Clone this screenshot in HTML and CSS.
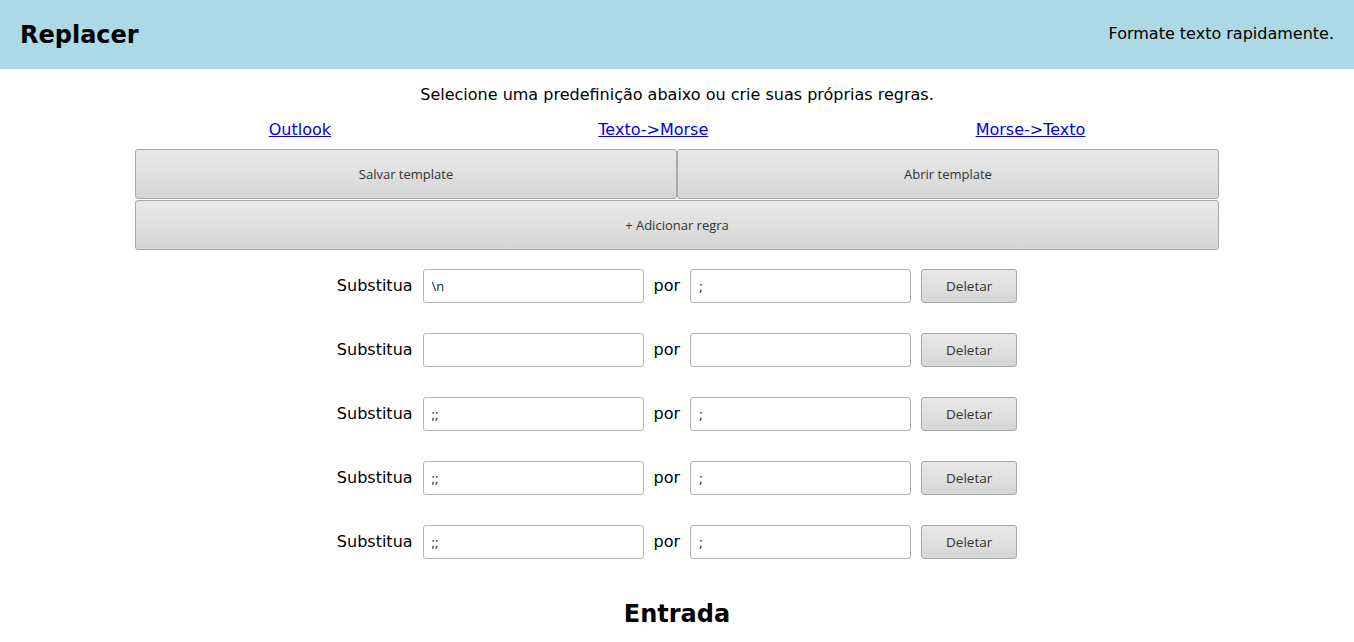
FILE: index.html
```html
<!DOCTYPE html>
<html lang="pt">
<head>
<meta charset="utf-8">
<title>Replacer</title>
<link rel="stylesheet" href="styles.css">
</head>
<body>
<header class="topbar">
  <h1 class="brand">Replacer</h1>
  <span class="tagline">Formate texto rapidamente.</span>
</header>
<main class="main">
  <p class="intro">Selecione uma predefinição abaixo ou crie suas próprias regras.</p>
  <nav class="presets">
    <a href="#">Outlook</a>
    <a href="#">Texto-&gt;Morse</a>
    <a href="#">Morse-&gt;Texto</a>
  </nav>
  <div class="actions">
    <button class="btn">Salvar template</button>
    <button class="btn">Abrir template</button>
    <button class="btn wide">+ Adicionar regra</button>
  </div>
  <div class="rules">
    <div class="rule">
      <span class="lbl">Substitua</span>
      <input class="field" type="text" value="\n">
      <span class="lbl">por</span>
      <input class="field" type="text" value=";">
      <button class="btn del">Deletar</button>
    </div>
    <div class="rule">
      <span class="lbl">Substitua</span>
      <input class="field" type="text" value="">
      <span class="lbl">por</span>
      <input class="field" type="text" value="">
      <button class="btn del">Deletar</button>
    </div>
    <div class="rule">
      <span class="lbl">Substitua</span>
      <input class="field" type="text" value=";;">
      <span class="lbl">por</span>
      <input class="field" type="text" value=";">
      <button class="btn del">Deletar</button>
    </div>
    <div class="rule">
      <span class="lbl">Substitua</span>
      <input class="field" type="text" value=";;">
      <span class="lbl">por</span>
      <input class="field" type="text" value=";">
      <button class="btn del">Deletar</button>
    </div>
    <div class="rule">
      <span class="lbl">Substitua</span>
      <input class="field" type="text" value=";;">
      <span class="lbl">por</span>
      <input class="field" type="text" value=";">
      <button class="btn del">Deletar</button>
    </div>
  </div>
  <h2 class="section">Entrada</h2>
</main>
</body>
</html>
```

FILE: styles.css
```css
html, body {
  margin: 0;
  padding: 0;
}
body {
  font-family: "DejaVu Sans", sans-serif;
  font-size: 16px;
  color: #000;
  background: #fff;
}
.topbar {
  background: #add8e6;
  height: 69px;
  display: flex;
  align-items: center;
  justify-content: space-between;
  padding: 0 20px;
}
.brand {
  margin: 0;
  font-size: 24px;
  font-weight: bold;
}
.tagline {
  font-size: 16px;
  padding-bottom: 2px;
}
.main {
  width: 1084px;
  margin: 0 auto;
}
.intro {
  text-align: center;
  margin: 16px 0 16px;
  line-height: 19px;
}
.presets {
  display: flex;
  justify-content: space-around;
  line-height: 19px;
  margin-bottom: 10px;
}
.presets a {
  color: #0000ee;
  text-decoration: underline;
}
.actions {
  display: grid;
  grid-template-columns: 1fr 1fr;
  gap: 1px 0;
}
.btn {
  font-family: "Open Sans", "DejaVu Sans", sans-serif;
  font-size: 13px;
  color: #333;
  background: linear-gradient(#e9e9e9, #d5d5d5);
  border: 1px solid #a9a9a9;
  border-radius: 3px;
  height: 50px;
  padding: 0;
}
.btn.wide {
  grid-column: 1 / 3;
}
.rules {
  display: flex;
  flex-direction: column;
  align-items: center;
  gap: 30px;
  padding-top: 19px;
}
.rule {
  display: flex;
  align-items: center;
  height: 34px;
}
.lbl {
  margin-right: 10px;
  padding-bottom: 2px;
}
.field {
  box-sizing: border-box;
  width: 221px;
  height: 34px;
  border: 1px solid #b3b3b3;
  border-radius: 3px;
  padding: 0 8px;
  font-family: "Open Sans", "DejaVu Sans", sans-serif;
  font-size: 13px;
  color: #222;
  margin-right: 10px;
}
.btn.del {
  width: 96px;
  height: 34px;
  font-size: 13.5px;
}
.section {
  text-align: center;
  font-size: 24px;
  font-weight: bold;
  margin: 41px 0 0;
}
```
